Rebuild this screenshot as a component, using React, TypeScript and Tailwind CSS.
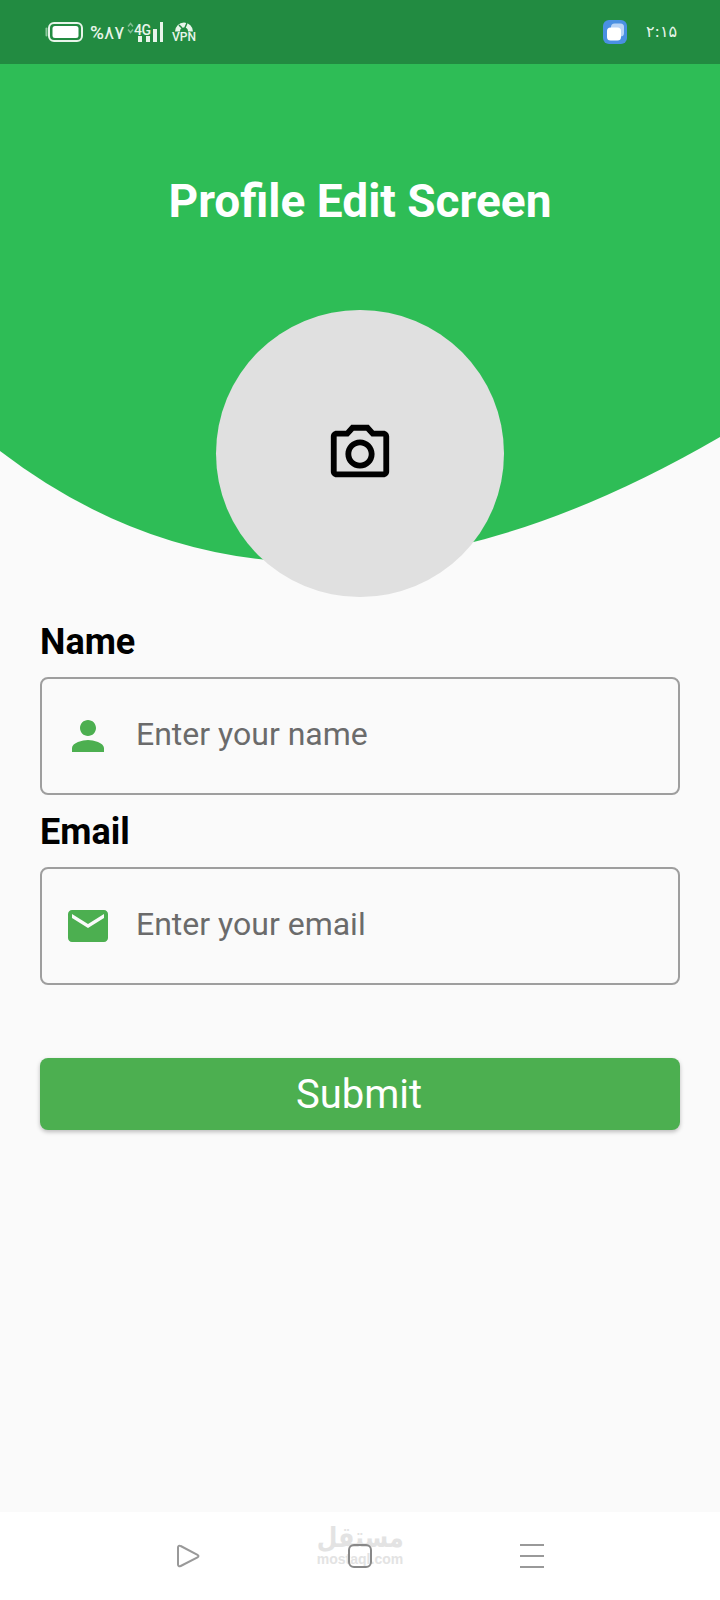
import { MdEmail, MdOutlineCameraAlt, MdPerson } from 'react-icons/md';

// Status bar, left cluster: battery, percent, network and VPN
function StatusLeft() {
  return (
    <div className="flex items-center text-[#e8f5ea]">
      <svg width="38" height="20" viewBox="0 0 38 20">
        <path d="M1.500 6.500V13.500" stroke="#8fc79f" strokeWidth="2" strokeLinecap="round" />
        <rect x="4" y="1" width="33" height="18" rx="5" fill="none" stroke="currentColor" strokeWidth="2" />
        <rect x="7.500" y="4" width="26" height="12" rx="2.500" fill="#fff" />
      </svg>
      <span className="ml-[7px] w-[37px] text-[19px] leading-none font-medium font-['Roboto','DejaVu_Sans',sans-serif]">%۸۷</span>
      <svg width="7" height="12" viewBox="0 0 7 12" className="mb-[8px]">
        <path d="M1 4.500L3.500 1.500L6 4.500M1 7.500L3.500 10.500L6 7.500" fill="none" stroke="#7fbb90" strokeWidth="1.500" />
      </svg>
      <div className="relative h-[20px] w-[30px]">
        <span className="absolute left-0 top-[1px] text-[14px] leading-none font-medium tracking-[-0.5px] font-['Roboto',sans-serif]">4G</span>
        <svg width="30" height="20" viewBox="0 0 30 20" className="absolute inset-0">
          <rect x="4" y="14" width="4" height="6" fill="currentColor" />
          <rect x="12" y="14" width="4" height="6" fill="currentColor" />
          <rect x="19" y="7" width="4" height="13" fill="currentColor" />
          <rect x="26" y="0" width="3" height="20" fill="currentColor" />
        </svg>
      </div>
      <div className="ml-[10px] flex w-[20px] flex-col items-center">
        <svg width="20" height="11" viewBox="0 0 20 11">
          <path d="M1 10.500A9 9 0 0 1 19 10.500H14A4 4 0 0 0 6 10.500Z" fill="currentColor" />
          <path d="M10 9L13 2M5 4L8 7" stroke="#228b41" strokeWidth="1.500" />
        </svg>
        <span className="text-[12px] leading-[11px] font-medium font-['Roboto',sans-serif]">VPN</span>
      </div>
    </div>
  );
}

function StatusRight() {
  return (
    <div className="flex items-center">
      <svg width="24" height="24" viewBox="0 0 24 24">
        <rect width="24" height="24" rx="6" fill="#4a90e2" />
        <rect x="8" y="3.500" width="13" height="13" rx="3.500" fill="#b9d4f6" />
        <rect x="4" y="7.500" width="14" height="13" rx="3.500" fill="#fff" />
      </svg>
      <span className="ml-[19px] w-[28px] text-[16px] leading-none tracking-[-2px] text-[#e8f5ea] font-['DejaVu_Sans',sans-serif]">۲:۱۵</span>
    </div>
  );
}

function Field({ label, placeholder, icon }: { label: string; placeholder: string; icon: React.ReactNode }) {
  return (
    <div>
      <div className="text-[36px] leading-[50px] font-bold text-black">{label}</div>
      <div className="mt-[10px] flex h-[118px] items-center rounded-[8px] border-2 border-[#9e9e9e]">
        <div className="ml-[22px] flex h-[48px] w-[48px] items-center justify-center text-[#4caf50]">{icon}</div>
        <span className="mb-[5px] ml-[24px] text-[32px] leading-none text-[#6b6b6b]">{placeholder}</span>
      </div>
    </div>
  );
}

export default function App() {
  return (
    <div className="flex min-h-screen flex-col overflow-hidden bg-[#fafafa] font-['Roboto',sans-serif]">
      <div className="flex h-[64px] items-center justify-between bg-[#228b41] pl-[45px] pr-[46px]">
        <StatusLeft />
        <StatusRight />
      </div>

      {/* header: curved green background with title and avatar on top */}
      <div className="relative flex h-[533px] flex-col items-center">
        <svg width="720" height="500" viewBox="0 0 720 500" className="absolute left-0 top-0">
          <path d="M0 0H720V373Q300 617 0 387Z" fill="#2ebd56" />
        </svg>
        <h1 className="relative mt-[107px] text-[46px] leading-[60px] font-bold text-white">Profile Edit Screen</h1>
        <div className="relative mt-[79px] flex h-[288px] w-[288px] items-center justify-center rounded-full bg-[#e0e0e0]">
          <MdOutlineCameraAlt size={70} color="#000" />
        </div>
      </div>

      <div className="flex flex-col gap-[12px] px-[40px] pt-[20px]">
        <Field label="Name" placeholder="Enter your name" icon={<MdPerson size={48} />} />
        <Field label="Email" placeholder="Enter your email" icon={<MdEmail size={48} />} />
        <button
          type="button"
          className="mt-[61px] h-[72px] rounded-[8px] bg-[#4caf50] pr-[2px] pt-[2px] text-[40px] text-white shadow-[0_2px_4px_rgba(0,0,0,0.25)]"
        >
          Submit
        </button>
      </div>

      <div className="relative mt-auto flex h-[88px] items-center justify-center gap-[148px] bg-white">
        {/* mostaql watermark */}
        <div className="absolute left-[317px] top-[12px] flex w-[86px] flex-col items-center text-[#e3e3e3]">
          <span className="scale-x-[0.85] whitespace-nowrap text-[28px] leading-[28px] font-bold font-['DejaVu_Sans',sans-serif]">مستقل</span>
          <span className="text-[14px] leading-[14px] font-bold font-['Liberation_Sans',sans-serif]">mostaql.com</span>
        </div>
        <svg width="24" height="24" viewBox="0 0 24 24" className="relative">
          <path d="M2 3.500C2 1.800 3.300 1.200 4.700 2L21.500 10.800C22.800 11.500 22.800 12.700 21.500 13.400L4.700 22C3.300 22.800 2 22.200 2 20.500Z" fill="none" stroke="#999" strokeWidth="2" />
        </svg>
        <svg width="24" height="24" viewBox="0 0 24 24" className="relative">
          <rect x="1" y="1" width="22" height="22" rx="5" fill="none" stroke="#888" strokeWidth="2" />
        </svg>
        <svg width="24" height="24" viewBox="0 0 24 24" className="relative">
          <path d="M0 1H24M0 12H24M0 23H24" stroke="#999" strokeWidth="2" />
        </svg>
      </div>
    </div>
  );
}
